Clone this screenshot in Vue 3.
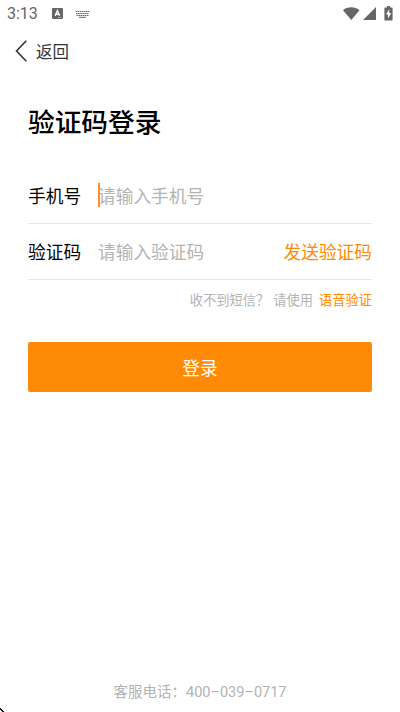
<script setup>
import { ref } from 'vue'

const phone = ref('')
const code = ref('')
</script>

<template>
  <main class="screen">
    <header class="status">
      <span class="clock">3:13</span>
      <svg class="badge" width="11" height="11" viewBox="0 0 11 11">
        <rect width="11" height="11" rx="1" fill="#666" />
        <path d="M3.2 7.8 5.4 2.5 7.6 7.8M4 6.2h2.8" fill="none" stroke="#fff" stroke-width="1.4" />
        <path d="M6 9.5h1.500M8.500 9.500h1" stroke="#ddd" stroke-width=".8" />
      </svg>
      <svg class="keyboard" width="15" height="8" viewBox="0 0 15 8">
        <g fill="none" stroke="#666" stroke-width="1.2">
          <path d="M.5 1.5h14" stroke-dasharray="1.6 .5" />
          <path d="M1 3.5h13" stroke-dasharray="1.6 .5" />
          <path d="M1.500 5.500h12" stroke-dasharray="1.6 .5" />
          <path d="M4 7.300h7" stroke-width="1" />
        </g>
      </svg>
      <svg class="signals" width="52" height="16" viewBox="0 0 52 16" fill="#666">
        <path d="M1 4.200C5.500.4 12.800.4 17.500 4.200L9.300 14z" />
        <path d="M34 1v13H21z" />
        <path d="M43 1.500h2V0h3v1.500h2q.6 0 .6.600v11.700q0 .600-.6.600h-7q-.6 0-.6-.600V2.100q0-.6.600-.600z" />
        <path d="M47.200 3.300 44 8.600h2v3.900l3.200-5.400h-2z" fill="#fff" />
      </svg>
    </header>

    <nav class="nav">
      <svg width="12" height="22" viewBox="0 0 12 22">
        <path d="M11.300 .7 1.500 11 11.300 21.300" fill="none" stroke="#333" stroke-width="1.6" />
      </svg>
      <span>返回</span>
    </nav>

    <section class="content">
      <h1>验证码登录</h1>
      <div class="row first">
        <label for="phone">手机号</label>
        <i class="caret"></i>
        <input id="phone" v-model="phone" type="tel" placeholder="请输入手机号" />
      </div>
      <div class="row">
        <label for="code">验证码</label>
        <input id="code" v-model="code" placeholder="请输入验证码" />
        <button class="send" type="button">发送验证码</button>
      </div>
      <p class="hint"><span>收不到短信？</span><span class="use">请使用</span><a>语音验证</a></p>
      <button class="login" type="button">登录</button>
    </section>

    <footer>客服电话：<span>400–039–0717</span></footer>
    <svg class="corner" width="4" height="5" viewBox="0 0 4 5">
      <path d="M0 1h1v1h1v1h1v1h1v1H2V4H1V3H0z" fill="#111" />
    </svg>
  </main>
</template>

<style>
body { margin: 0; background: #fff; }
</style>

<style scoped>
.screen {
  box-sizing: border-box;
  position: relative;
  display: flex;
  flex-direction: column;
  height: 712px;
  overflow: hidden;
  background: #fff;
  color: #000;
  font-family: Roboto, "Noto Sans CJK SC", sans-serif;
}
.screen * { box-sizing: border-box; }
svg { display: block; flex: none; }
.status {
  display: flex;
  align-items: center;
  height: 27px;
  padding: 0 6px 0 7px;
  color: #666;
}
.clock { width: 45px; font-size: 16px; line-height: 27px; }
.keyboard { margin-left: 12px; }
.signals { margin-left: auto; }
.nav {
  display: flex;
  align-items: center;
  gap: 9px;
  height: 48px;
  padding-left: 15px;
  color: #333;
  font-size: 16.5px;
}
.content { padding: 0 28px; }
h1 {
  margin: 28px 0 24px;
  font-size: 26.7px;
  font-weight: 500;
  line-height: 40px;
}
.row {
  position: relative;
  display: flex;
  align-items: center;
  height: 56px;
  border-bottom: 1px solid #e8e8e8;
  font-size: 17.7px;
}
.row.first { height: 57px; }
label { width: 70px; flex: none; padding-bottom: 2px; }
input {
  flex: 1;
  min-width: 0;
  padding: 2px 0 0;
  border: 0;
  outline: 0;
  background: transparent;
  color: #000;
  font: inherit;
}
input::placeholder { color: #b3b3b3; opacity: 1; }
.first label { padding-bottom: 0; }
.first input { padding-top: 4px; }
.caret {
  position: absolute;
  left: 70px;
  top: 16px;
  width: 2px;
  height: 24px;
  background: #ff8f24;
}
button { padding: 0; border: 0; font-family: inherit; }
.send { padding-bottom: 2px; background: none; color: #ff8a05; font-size: 17.7px; }
.hint {
  display: flex;
  justify-content: flex-end;
  margin: 11px 0 0;
  color: #b3b3b3;
  font-size: 13.25px;
  line-height: 20px;
}
.use { margin-left: 4px; }
.hint a { margin-left: 6px; color: #ff8a05; }
.login {
  display: block;
  width: 100%;
  height: 50px;
  margin-top: 31px;
  border-radius: 2px;
  background: #ff8a05;
  color: #fff;
  font-size: 17.7px;
}
footer {
  margin: auto 0 8px;
  color: #b3b3b3;
  font-size: 14.5px;
  line-height: 22px;
  text-align: center;
}
.corner { position: absolute; left: 0; bottom: 0; }
</style>
